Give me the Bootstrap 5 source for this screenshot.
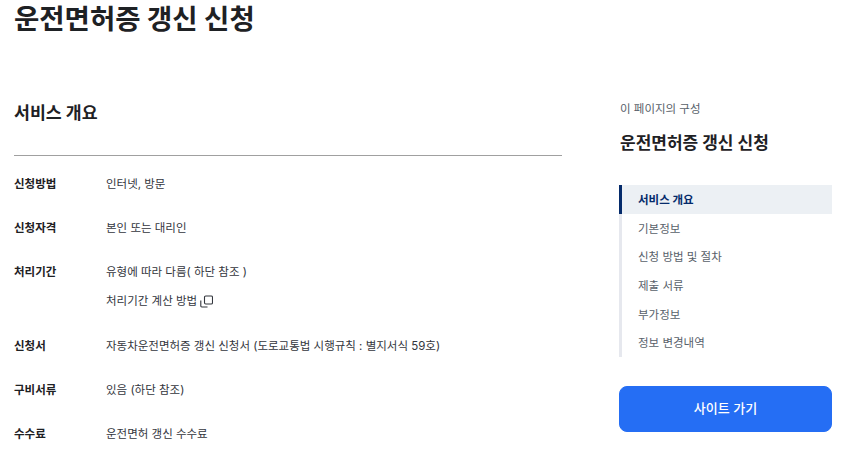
<!DOCTYPE html>
<html lang="ko">
<head>
<meta charset="utf-8">
<title>운전면허증 갱신 신청</title>
<link href="https://cdn.jsdelivr.net/npm/bootstrap@5.3.0/dist/css/bootstrap.min.css" rel="stylesheet">
<style>
html,body{height:455px;overflow:hidden}
body{font-family:"Inter","Noto Sans CJK KR",sans-serif;color:#1e2124;background:#fff}
.pg-wrap{padding:0 12px 0 14px;gap:57px;align-items:flex-start}
.pg-main{width:548px;flex:none}
.pg-side{width:213px;flex:none;padding-top:100px}
.pg-title{font-size:27.5px;line-height:38px;font-weight:700;margin:0;color:#1e2124}
.sec-title{font-size:17.3px;line-height:28px;font-weight:700;margin:0;padding-top:61px;padding-bottom:28px;border-bottom:1px solid #a0a0a0;color:#1e2124}
.info-list{margin:0;padding-top:16px}
.info-row{display:flex;margin-bottom:20px}
.info-row dt{width:92px;flex:none;font-size:11.5px;line-height:24px;font-weight:700}
.info-row dd{margin:0;font-size:11.5px;line-height:24px;color:#33363d}
.info-sub{margin-top:5px;padding-bottom:1px;display:flex;align-items:center;gap:3px}
.side-kicker{font-size:11.5px;line-height:16px;color:#58616a;margin:1px 0 0 1px}
.side-title{font-size:17px;line-height:24px;font-weight:700;margin:14px 0 0 1px;color:#1e2124}
.side-nav{margin-top:30px;border-left:3px solid #e6e8ee;flex-direction:column;flex-wrap:nowrap}
.side-link{display:block;height:28.67px;line-height:30px;padding:0 0 0 16px;font-size:11.5px;color:#58616a;text-decoration:none}
.side-link.active{background:#ecf0f4;color:#052b6b;font-weight:700;margin-left:-3px;border-left:3px solid #052b6b}
.go-btn{margin-top:29px;height:46px;width:100%;background:#256ef4;border:1px solid #256ef4;border-radius:8px;color:#fff;font-size:13px;font-weight:500;display:flex;align-items:center;justify-content:center}
.go-btn:hover{background:#256ef4;color:#fff}
</style>
</head>
<body>
<div class="d-flex pg-wrap">
  <main class="pg-main">
    <h1 class="pg-title">운전면허증 갱신 신청</h1>
    <h2 class="sec-title">서비스 개요</h2>
    <dl class="info-list">
      <div class="info-row"><dt>신청방법</dt><dd>인터넷, 방문</dd></div>
      <div class="info-row"><dt>신청자격</dt><dd>본인 또는 대리인</dd></div>
      <div class="info-row"><dt>처리기간</dt><dd>유형에 따라 다름( 하단 참조 )
        <div class="info-sub">처리기간 계산 방법
          <svg width="13" height="13" viewBox="0 0 13 13" fill="none" stroke="#33363d" stroke-width="1.1"><rect x="4.5" y="1" width="8" height="8" rx="1.2"/><path d="M.8 5.5v5.5a1 1 0 0 0 1 1H7.5"/></svg>
        </div></dd></div>
      <div class="info-row"><dt>신청서</dt><dd>자동차운전면허증 갱신 신청서 (도로교통법 시행규칙 : 별지서식 59호)</dd></div>
      <div class="info-row"><dt>구비서류</dt><dd>있음 (하단 참조)</dd></div>
      <div class="info-row"><dt>수수료</dt><dd>운전면허 갱신 수수료</dd></div>
    </dl>
  </main>
  <aside class="pg-side">
    <p class="side-kicker">이 페이지의 구성</p>
    <p class="side-title">운전면허증 갱신 신청</p>
    <nav class="nav side-nav">
      <a class="side-link active" href="#">서비스 개요</a>
      <a class="side-link" href="#">기본정보</a>
      <a class="side-link" href="#">신청 방법 및 절차</a>
      <a class="side-link" href="#">제출 서류</a>
      <a class="side-link" href="#">부가정보</a>
      <a class="side-link" href="#">정보 변경내역</a>
    </nav>
    <a class="btn go-btn" href="#">사이트 가기</a>
  </aside>
</div>
<script src="https://cdn.jsdelivr.net/npm/bootstrap@5.3.0/dist/js/bootstrap.bundle.min.js"></script>
</body>
</html>
